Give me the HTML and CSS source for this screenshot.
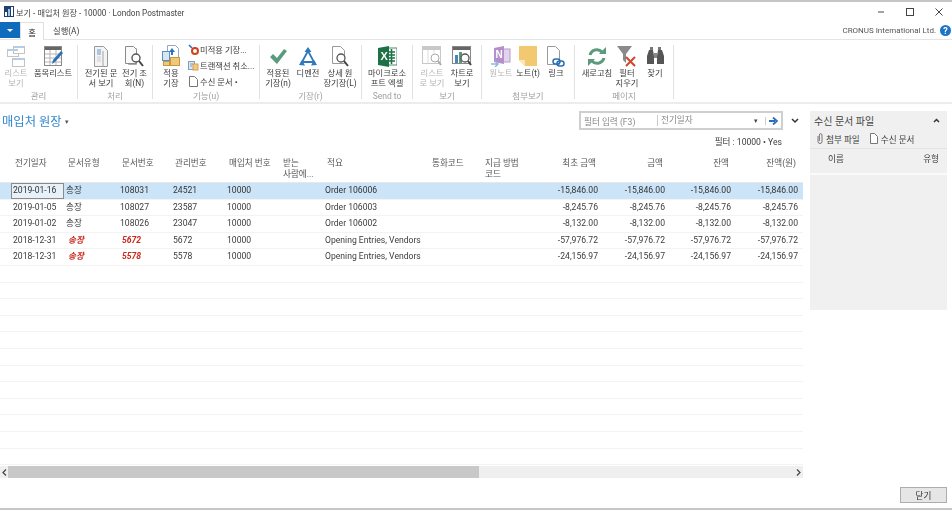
FILE: index.html
```html
<!DOCTYPE html>
<html lang="ko">
<head>
    <meta charset="UTF-8">
    <meta name="viewport" content="width=device-width, initial-scale=1.0">
    <title>매입처 원장</title>
    <link rel="stylesheet" href="styles.css">
</head>
<body>
<div class="window">
    <div class="titlebar">
        <svg class="app-icon" width="10" height="11" viewBox="0 0 10 11"><rect width="10" height="11" fill="#1f3f6e"/><rect x="1" y="6" width="2" height="4" fill="#fff"/><rect x="4" y="3" width="2" height="7" fill="#9cc3e6"/><rect x="7" y="1" width="2" height="9" fill="#fff"/></svg>
        <span class="title-text">보기 - 매입처 원장 - 10000 · London Postmaster</span>
        <div class="win-controls">
            <svg width="8" height="8" viewBox="0 0 8 8"><path d="M1 4h6" stroke="#666" stroke-width="1.2"/></svg>
            <svg width="8" height="8" viewBox="0 0 8 8"><rect x=".5" y=".5" width="7" height="7" fill="none" stroke="#444"/></svg>
            <svg width="8" height="8" viewBox="0 0 8 8"><path d="M.5.5l7 7M7.5.5l-7 7" stroke="#444"/></svg>
        </div>
    </div>

    <div class="tabs">
        <div class="file-btn"><span class="file-arrow"></span></div>
        <div class="tab active">홈</div>
        <div class="tab">실행(A)</div>
        <div class="company">CRONUS International Ltd.<span class="help">?</span></div>
    </div>

    <div class="ribbon">
        <div class="group g1">
            <div class="btns">
                <div class="rb w32 off">
                    <svg width="18" height="21" viewBox="0 0 18 21"><g fill="#fff" stroke="#c4c4c4"><rect x=".5" y="3.5" width="11" height="7"/><rect x="6.5" y=".5" width="11" height="7"/><rect x="5.5" y="12.5" width="12" height="8"/></g><path d="M1 4h10M7 1h10M6 13h11" stroke="#b4cde2" stroke-width="2"/></svg>
                    <span>리스트<br>보기</span>
                </div>
                <div class="rb w42">
                    <svg width="19" height="21" viewBox="0 0 19 21"><rect x=".5" y=".5" width="17" height="19" fill="#fff" stroke="#8a8a8a"/><rect x="1" y="1" width="16" height="3" fill="#666"/><path d="M1 8h16M1 12h16M1 16h16M6 4v15M12 4v15" stroke="#b5b5b5"/><path d="M8 18l1-4 8-9 2 2-8 9z" fill="#2a6fb5"/></svg>
                    <span>품목리스트</span>
                </div>
            </div>
            <div class="group-label">관리</div>
        </div>
        <div class="group g2">
            <div class="btns">
                <div class="rb w38">
                    <svg width="14" height="21" viewBox="0 0 14 21"><path d="M.5.5h9l4 4v16H.5z" fill="#f4f4f4" stroke="#999"/><rect x="3" y="3" width="4" height="6" fill="#a9c6e2"/><path d="M9 5v15" stroke="#ccc" stroke-width="2"/><path d="M3 11h4M3 13h4M3 15h4" stroke="#ccc"/></svg>
                    <span>전기된 문<br>서 보기</span>
                </div>
                <div class="rb w29">
                    <svg width="19" height="21" viewBox="0 0 19 21"><path d="M3.5 2.5h8v16h-8z" fill="#eee" stroke="#aaa"/><path d="M.5.5h8l3 3v14H.5z" fill="#fafafa" stroke="#8a8a8a"/><circle cx="11" cy="12" r="4" fill="#fff" stroke="#555" stroke-width="1.4"/><path d="M14 15l4 5" stroke="#444" stroke-width="2"/></svg>
                    <span>전기 조<br>회(N)</span>
                </div>
            </div>
            <div class="group-label">처리</div>
        </div>
        <div class="group g3">
            <div class="btns">
                <div class="rb w26">
                    <svg width="19" height="22" viewBox="0 0 19 22"><path d="M5.5.5h8l3 3v9h-11z" fill="#fff" stroke="#8fa8c4"/><path d="M7 7l3-4 3 4h-2v3H9V7z" fill="#2a74bd"/><rect x=".5" y="6.5" width="7" height="9" fill="#d6e6f4" stroke="#5a8fc0"/><rect x="8.5" y="12.5" width="9" height="8" fill="#f0c878" stroke="#c89a40"/><rect x="1.5" y="16.5" width="6" height="4" fill="#f0c878" stroke="#c89a40"/></svg>
                    <span>적용<br>기장</span>
                </div>
                <div class="small-list">
                    <div class="small-item">
                        <svg width="11" height="11" viewBox="0 0 11 11"><path d="M1 1l3 3" stroke="#2a6fb5" stroke-width="1.5"/><circle cx="7" cy="7" r="3" fill="none" stroke="#d2401e" stroke-width="2"/></svg>
                        <span>미적용 기장...</span>
                    </div>
                    <div class="small-item">
                        <svg width="11" height="11" viewBox="0 0 11 11"><rect x=".5" y="1.5" width="6" height="8" fill="#dde8f3" stroke="#7f9fbf"/><rect x="5" y="4" width="5" height="6" fill="#f1c98a" stroke="#d2a050"/><path d="M2 4h3M2 6h2" stroke="#7f9fbf"/></svg>
                        <span>트랜잭션 취소...</span>
                    </div>
                    <div class="small-item">
                        <svg width="11" height="11" viewBox="0 0 11 11"><path d="M1.5.5h5l3 3v7h-8z" fill="#fff" stroke="#777"/></svg>
                        <span>수신 문서 <b class="dot">•</b></span>
                    </div>
                </div>
            </div>
            <div class="group-label">기능(u)</div>
        </div>
        <div class="group g4">
            <div class="btns">
                <div class="rb w32">
                    <svg width="18" height="17" viewBox="0 0 18 17"><path d="M1 9l3-3 4 4 7-9 3 2-10 13z" fill="#5b9a7e"/></svg>
                    <span>적용된<br>기장(n)</span>
                </div>
                <div class="rb w28">
                    <svg width="18" height="19" viewBox="0 0 18 19"><path d="M3 15L9 4l6 11z" fill="none" stroke="#2f78bd" stroke-width="1.8"/><path d="M9 0L5.500 5h7zM0 18l6 .5-3-5.500zM18 18l-6 .5 3-5.500z" fill="#2f78bd"/></svg>
                    <span>디멘전</span>
                </div>
                <div class="rb w36">
                    <svg width="17" height="21" viewBox="0 0 17 21"><path d="M.5.5h8l4 4v13H.5z" fill="#fff" stroke="#999"/><circle cx="9" cy="12" r="4" fill="#fff" stroke="#555" stroke-width="1.3"/><path d="M12 15l4 5" stroke="#444" stroke-width="2"/></svg>
                    <span>상세 원<br>장기장(L)</span>
                </div>
            </div>
            <div class="group-label">기장(r)</div>
        </div>
        <div class="group g5">
            <div class="btns">
                <div class="rb w48">
                    <svg width="19" height="21" viewBox="0 0 19 21"><rect x="8" y="2" width="11" height="17" fill="#fff" stroke="#1e7145" stroke-width=".8"/><path d="M10 6h7M10 9h7M10 12h7M10 15h7M13.500 3v15" stroke="#1e7145" stroke-width="1.6"/><path d="M0 2l11-2v21L0 19z" fill="#1e7145"/><text class="xl" x="2.500" y="14">X</text></svg>
                    <span>마이크로소<br>프트 엑셀</span>
                </div>
            </div>
            <div class="group-label">Send to</div>
        </div>
        <div class="group g6">
            <div class="btns">
                <div class="rb w28 off">
                    <svg width="20" height="20" viewBox="0 0 20 20"><rect x=".5" y=".5" width="18" height="17" fill="#fff" stroke="#c8c8c8"/><rect x="1" y="1" width="17" height="3" fill="#c8c8c8"/><path d="M6 4v13M12 4v6" stroke="#ddd"/><circle cx="13" cy="12" r="4" fill="#fff" stroke="#aaa"/><path d="M16 15l3 4" stroke="#aaa" stroke-width="2"/></svg>
                    <span>리스트<br>로 보기</span>
                </div>
                <div class="rb w32">
                    <svg width="20" height="20" viewBox="0 0 20 20"><rect x=".5" y=".5" width="18" height="17" fill="#fff" stroke="#888"/><rect x="1" y="1" width="17" height="3" fill="#666"/><rect x="3" y="9" width="3" height="8" fill="#4a86b8"/><rect x="7" y="6" width="3" height="11" fill="#5b9a7e"/><circle cx="13" cy="12" r="4" fill="#fff" stroke="#555" stroke-width="1.3"/><path d="M16 15l3 4" stroke="#444" stroke-width="2"/></svg>
                    <span>차트로<br>보기</span>
                </div>
            </div>
            <div class="group-label">보기</div>
        </div>
        <div class="group g7">
            <div class="btns">
                <div class="rb w30 off">
                    <svg width="20" height="21" viewBox="0 0 20 21"><rect x="10" y="3" width="9" height="13" fill="#e3d3ec" stroke="#b79ccb"/><path d="M3 2l10-2v18L3 16z" fill="#b58fcc"/><text class="one" x="4.500" y="12">N</text><path d="M0 18h6M4 15l3 3-3 3" fill="none" stroke="#8fb8e0" stroke-width="1.5"/></svg>
                    <span>원노트</span>
                </div>
                <div class="rb w24">
                    <svg width="18" height="20" viewBox="0 0 18 20"><path d="M0 0h18v20H6l-6-6z" fill="#f2c871"/><path d="M0 14h6v6z" fill="#fbe7b8"/></svg>
                    <span>노트(t)</span>
                </div>
                <div class="rb w32">
                    <svg width="18" height="21" viewBox="0 0 18 21"><path d="M.5.5h8l4 4v14H.5z" fill="#fff" stroke="#999"/><rect x="6" y="13" width="7" height="5" rx="2.500" fill="none" stroke="#2a6fb5" stroke-width="1.500"/><rect x="10" y="15" width="7" height="5" rx="2.500" fill="none" stroke="#2a6fb5" stroke-width="1.500"/></svg>
                    <span>링크</span>
                </div>
            </div>
            <div class="group-label">첨부보기</div>
        </div>
        <div class="group g8">
            <div class="btns">
                <div class="rb w34">
                    <svg width="18" height="19" viewBox="0 0 18 19"><path d="M2 8a7 7 0 0 1 12-3" fill="none" stroke="#5b9a7e" stroke-width="3"/><path d="M11 7h7V0z" fill="#5b9a7e"/><path d="M16 11a7 7 0 0 1-12 3" fill="none" stroke="#5b9a7e" stroke-width="3"/><path d="M7 12H0v7z" fill="#5b9a7e"/></svg>
                    <span>새로고침</span>
                </div>
                <div class="rb w26">
                    <svg width="20" height="21" viewBox="0 0 20 21"><path d="M0 0h15L9 8v9L6 14V8z" fill="#8a8a8a"/><path d="M9 11l9 9M18 11l-9 9" stroke="#d2452e" stroke-width="2"/></svg>
                    <span>필터<br>지우기</span>
                </div>
                <div class="rb w30">
                    <svg width="17" height="18" viewBox="0 0 17 18"><path d="M2 3h4l1 6v8H0V9zM11 3h4l2 6v8h-7V9z" fill="#555"/><rect x="7" y="6" width="3" height="5" fill="#888"/><rect x="3" y="0" width="3" height="3" fill="#777"/><rect x="11" y="0" width="3" height="3" fill="#777"/></svg>
                    <span>찾기</span>
                </div>
            </div>
            <div class="group-label">페이지</div>
        </div>
    </div>

    <div class="main">
        <div class="list-col">
            <div class="list-top">
                <div class="page-title">매입처 원장 <span class="title-caret">▾</span></div>
                <div class="filter-area">
                    <div class="filter-box">
                        <span class="filter-input">필터 입력 (F3)</span>
                        <span class="filter-field">전기일자</span>
                        <span class="filter-drop">▾</span>
                        <span class="filter-go">
                            <svg width="9" height="8" viewBox="0 0 9 8"><path d="M0 4h6M4 .5L8 4 4 7.500" fill="none" stroke="#2a6fb5" stroke-width="1.800"/></svg>
                        </span>
                    </div>
                    <svg class="filter-chevron" width="8" height="6" viewBox="0 0 8 6"><path d="M1 1l3 3 3-3" fill="none" stroke="#333" stroke-width="1.500"/></svg>
                </div>
            </div>
            <div class="filter-summary">필터 : 10000 • Yes</div>

            <div class="row head">
                <div>전기일자</div><div>문서유형</div><div>문서번호</div><div>관리번호</div><div>매입처 번호</div><div>받는<br>사람에...</div><div>적요</div><div>통화코드</div><div>지급 방법<br>코드</div><div class="num">최초 금액</div><div class="num">금액</div><div class="num">잔액</div><div class="num">잔액(원)</div>
            </div>
            <div class="rows">
                <div class="row selected">
                    <div class="focus">2019-01-16</div><div class="ko">송장</div><div>108031</div><div>24521</div><div>10000</div><div></div><div>Order 106006</div><div></div><div></div><div class="num">-15,846.00</div><div class="num">-15,846.00</div><div class="num">-15,846.00</div><div class="num">-15,846.00</div>
                </div>
                <div class="row">
                    <div>2019-01-05</div><div class="ko">송장</div><div>108027</div><div>23587</div><div>10000</div><div></div><div>Order 106003</div><div></div><div></div><div class="num">-8,245.76</div><div class="num">-8,245.76</div><div class="num">-8,245.76</div><div class="num">-8,245.76</div>
                </div>
                <div class="row">
                    <div>2019-01-02</div><div class="ko">송장</div><div>108026</div><div>23047</div><div>10000</div><div></div><div>Order 106002</div><div></div><div></div><div class="num">-8,132.00</div><div class="num">-8,132.00</div><div class="num">-8,132.00</div><div class="num">-8,132.00</div>
                </div>
                <div class="row">
                    <div>2018-12-31</div><div class="ko neg">송장</div><div class="neg">5672</div><div>5672</div><div>10000</div><div></div><div>Opening Entries, Vendors</div><div></div><div></div><div class="num">-57,976.72</div><div class="num">-57,976.72</div><div class="num">-57,976.72</div><div class="num">-57,976.72</div>
                </div>
                <div class="row">
                    <div>2018-12-31</div><div class="ko neg">송장</div><div class="neg">5578</div><div>5578</div><div>10000</div><div></div><div>Opening Entries, Vendors</div><div></div><div></div><div class="num">-24,156.97</div><div class="num">-24,156.97</div><div class="num">-24,156.97</div><div class="num">-24,156.97</div>
                </div>
                <div class="row"></div><div class="row"></div><div class="row"></div><div class="row"></div>
                <div class="row"></div><div class="row"></div><div class="row"></div><div class="row"></div>
                <div class="row"></div><div class="row"></div><div class="row"></div><div class="row"></div>
            </div>
            <div class="hscroll">
                <svg width="5" height="7" viewBox="0 0 5 7"><path d="M4 .5L1 3.500 4 6.500" fill="none" stroke="#444" stroke-width="1.200"/></svg>
                <div class="hscroll-track"><div class="hscroll-thumb"></div></div>
                <svg width="5" height="7" viewBox="0 0 5 7"><path d="M1 .5L4 3.500 1 6.500" fill="none" stroke="#444" stroke-width="1.200"/></svg>
            </div>
        </div>

        <div class="factbox">
            <div class="fact-title"><span>수신 문서 파일</span><svg width="7" height="5" viewBox="0 0 7 5"><path d="M1 4l2.500-2.500L6 4" fill="none" stroke="#333" stroke-width="1.500"/></svg></div>
            <div class="fact-actions">
                <svg width="6" height="11" viewBox="0 0 6 11"><path d="M1 3v5.500a2 2 0 0 0 4 0V2a1.300 1.300 0 0 0-2.600 0v6" fill="none" stroke="#777"/></svg>
                <span>첨부 파일</span>
                <svg class="doc" width="8" height="11" viewBox="0 0 8 11"><path d="M.5.5h4l3 3v7h-7z" fill="#fff" stroke="#777"/></svg>
                <span>수신 문서</span>
            </div>
            <div class="fact-head"><span>이름</span><span>유형</span></div>
        </div>
    </div>

    <div class="footer"><button class="close-btn">닫기</button></div>
</div>
</body>
</html>
```

FILE: styles.css
```css
* {
    box-sizing: border-box;
}
body {
    margin: 0;
    background-color: #fff;
    font-family: Roboto, "Noto Sans CJK KR", sans-serif;
    font-size: 8.6px;
    color: #3c3c3c;
    overflow: hidden;
}
.window {
    display: flex;
    flex-direction: column;
    width: 952px;
    height: 510px;
    border-top: 2px solid #c6c6c6;
    border-bottom: 2px solid #c6c6c6;
    filter: blur(.35px);
}

/* title bar */
.titlebar {
    display: flex;
    align-items: center;
    height: 19px;
    padding-left: 4px;
    flex: none;
}
.title-text {
    margin-left: 2px;
    font-size: 8.2px;
    color: #444;
}
.win-controls {
    display: flex;
    gap: 21px;
    margin-left: auto;
    margin-right: 9px;
}

/* tabs */
.tabs {
    display: flex;
    align-items: flex-end;
    height: 19px;
    flex: none;
    border-bottom: 1px solid #e4e4e4;
}
.file-btn {
    display: flex;
    align-items: center;
    justify-content: center;
    width: 20px;
    height: 16px;
    margin-bottom: 1px;
    background-color: #0f6cbd;
}
.file-arrow {
    border-left: 3px solid transparent;
    border-right: 3px solid transparent;
    border-top: 3px solid #fff;
}
.tab {
    display: flex;
    align-items: center;
    justify-content: center;
    height: 18px;
    font-size: 8.3px;
}
.tab.active {
    width: 24px;
    margin-bottom: -1px;
    background-color: #fff;
    border: 1px solid #e0e0e0;
    border-bottom: none;
    color: #222;
}
.tab:not(.active) {
    margin-left: 9px;
}
.company {
    display: flex;
    align-items: center;
    height: 17px;
    margin-left: auto;
    margin-right: 1px;
    font-size: 8px;
    color: #555;
}
.help {
    display: inline-flex;
    align-items: center;
    justify-content: center;
    width: 11px;
    height: 11px;
    margin-left: 4px;
    border-radius: 50%;
    background-color: #1c74c4;
    color: #fff;
    font-size: 9px;
    font-weight: bold;
}

/* ribbon */
.ribbon {
    display: flex;
    height: 64px;
    flex: none;
    padding-top: 5px;
    border-bottom: 2px solid #ececec;
}
.group {
    display: flex;
    flex-direction: column;
    height: 54px;
    border-right: 1px solid #e2e2e2;
    flex: none;
}
.g1 { width: 78px; }
.g2 { width: 75px; }
.g3 { width: 107px; }
.g4 { width: 102px; }
.g5 { width: 51px; }
.g6 { width: 69px; }
.g7 { width: 93px; }
.g8 { width: 99px; }
.g2 .btns { padding-left: 4px; }
.g3 .btns { padding-left: 5px; }
.g4 .btns { padding-left: 2px; }
.g5 .btns { padding-left: 1px; }
.g6 .btns { padding-left: 5px; }
.g7 .btns { padding-left: 4px; }
.g8 .btns { padding-left: 5px; }
.btns {
    display: flex;
    flex: 1;
}
.group-label {
    height: 11px;
    line-height: 16px;
    text-align: center;
    font-size: 8.5px;
    color: #a0a0a0;
}
.rb {
    display: grid;
    grid-template-rows: 22px auto;
    justify-items: center;
    align-content: start;
    flex: none;
}
.rb svg {
    align-self: center;
}
.rb span {
    margin-top: 1px;
    line-height: 10px;
    text-align: center;
    white-space: nowrap;
    font-size: 8.3px;
    color: #3c3c3c;
}
.rb.off span {
    color: #b4b4b4;
}
.w24 { width: 24px; }
.w26 { width: 26px; }
.w28 { width: 28px; }
.w29 { width: 29px; }
.w30 { width: 30px; }
.w32 { width: 32px; }
.w34 { width: 34px; }
.w36 { width: 36px; }
.w38 { width: 38px; }
.w42 { width: 42px; }
.w48 { width: 48px; }
.small-list {
    display: flex;
    flex-direction: column;
    gap: 4px;
    margin: -2px 0 0 4px;
    font-size: 8.3px;
}
.small-item {
    display: flex;
    align-items: center;
    gap: 1px;
    height: 12px;
    white-space: nowrap;
}
.dot {
    font-size: 8px;
}
.xl {
    font: bold 11px "Liberation Sans", sans-serif;
    fill: #fff;
}
.one {
    font: bold 10px "Liberation Sans", sans-serif;
    fill: #fff;
}

/* main */
.main {
    display: flex;
    flex: 1;
    min-height: 0;
}
.list-col {
    display: flex;
    flex-direction: column;
    width: 803px;
    flex: none;
}
.list-top {
    display: flex;
    justify-content: space-between;
    height: 32px;
    padding-top: 7px;
    flex: none;
}
.page-title {
    margin-left: 2px;
    line-height: 22px;
    font-size: 12.300px;
    color: #2f88d0;
}
.title-caret {
    font-size: 7px;
    color: #555;
    vertical-align: 2px;
}
.filter-area {
    display: flex;
    align-items: flex-start;
}
.filter-box {
    display: flex;
    align-items: center;
    width: 204px;
    height: 19px;
    border: 2px solid #cfcfcf;
    color: #888;
}
.filter-input {
    width: 76px;
    padding-left: 3px;
}
.filter-field {
    flex: 1;
    padding-left: 3px;
    border-left: 1px solid #ccc;
    line-height: 11px;
}
.filter-drop {
    width: 11px;
    font-size: 7px;
    color: #444;
}
.filter-go {
    display: flex;
    justify-content: center;
    width: 16px;
    border-left: 1px solid #ccc;
}
.filter-chevron {
    margin: 7px 4px 0 8px;
}
.filter-summary {
    height: 20px;
    padding-right: 21px;
    line-height: 12px;
    text-align: right;
    flex: none;
}

/* table */
.row {
    display: grid;
    grid-template-columns: 53px 54px 53px 54px 54px 44px 105px 53px 53px 64px 67px 66px 67px;
    height: 16.600px;
    padding-left: 11px;
    border-bottom: 1px solid #f3f3f3;
    line-height: 15.600px;
}
.row > div {
    padding-left: 2px;
    white-space: nowrap;
}
.row .num {
    text-align: right;
}
.row.head {
    height: 27px;
    padding-top: 2px;
    border-bottom: 1px solid #e8e8e8;
    line-height: 11px;
    color: #555;
    flex: none;
}
.row.head > div {
    padding-left: 4px;
}
.row.head .num {
    padding-right: 2px;
}
.rows {
    flex: none;
}
.row.selected {
    background-color: #cce4f7;
    color: #333;
}
.row .focus {
    background-color: #e6f1fa;
    border: 1px solid #8a8a8a;
    padding-left: 1px;
    line-height: 13.600px;
}
.ko {
    color: #333;
}
.row .neg {
    padding-left: 4px;
    color: #c9281c;
    font-weight: bold;
    font-style: italic;
}

/* horizontal scrollbar */
.hscroll {
    display: flex;
    align-items: center;
    height: 12px;
    margin-top: 1px;
    padding: 0 2px;
    background-color: #efefef;
    flex: none;
}
.hscroll-track {
    flex: 1;
    height: 100%;
    margin: 0 1px;
}
.hscroll-thumb {
    width: 471px;
    height: 100%;
    background-color: #c8c8c8;
}

/* factbox */
.factbox {
    width: 137px;
    height: 199px;
    margin: 7px 0 0 7px;
    background-color: #f0f0f0;
    flex: none;
}
.fact-title {
    display: flex;
    align-items: center;
    justify-content: space-between;
    height: 18px;
    padding: 0 7px 0 4px;
    font-size: 10px;
    color: #444;
}
.fact-actions {
    display: flex;
    align-items: center;
    height: 20px;
    padding-left: 7px;
    gap: 3px;
    border-bottom: 1px solid #e4e4e4;
}
.fact-actions .doc {
    margin-left: 7px;
}
.fact-head {
    display: flex;
    justify-content: space-between;
    height: 26px;
    padding: 3px 8px 0 18px;
    border-bottom: 2px solid #fafafa;
}

/* footer */
.footer {
    display: flex;
    justify-content: flex-end;
    padding: 10px 5px 0 0;
    height: 31px;
    flex: none;
}
.close-btn {
    width: 47px;
    height: 16px;
    padding: 0;
    border: 1px solid #adadad;
    background-color: #e6e6e6;
    font: inherit;
    color: #333;
}
```
